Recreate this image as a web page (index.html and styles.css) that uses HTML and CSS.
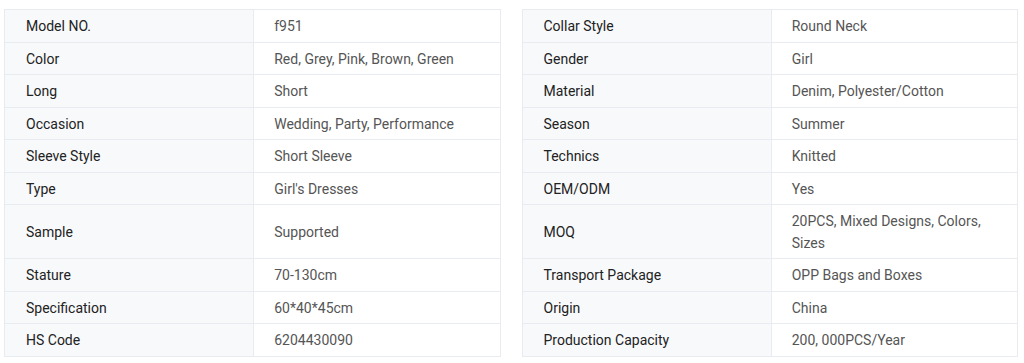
FILE: index.html
```html
<!DOCTYPE html>
<html lang="en">
<head>
<meta charset="utf-8">
<title>Specifications</title>
<link rel="stylesheet" href="styles.css">
</head>
<body>
<div class="specs">
  <table class="spec-table">
    <colgroup><col class="col-label"><col class="col-value"></colgroup>
    <tr><th>Model NO.</th><td>f951</td></tr>
    <tr><th>Color</th><td>Red, Grey, Pink, Brown, Green</td></tr>
    <tr><th>Long</th><td>Short</td></tr>
    <tr><th>Occasion</th><td>Wedding, Party, Performance</td></tr>
    <tr><th>Sleeve Style</th><td>Short Sleeve</td></tr>
    <tr><th>Type</th><td>Girl's Dresses</td></tr>
    <tr class="tall"><th>Sample</th><td>Supported</td></tr>
    <tr><th>Stature</th><td>70-130cm</td></tr>
    <tr><th>Specification</th><td>60*40*45cm</td></tr>
    <tr><th>HS Code</th><td>6204430090</td></tr>
  </table>
  <table class="spec-table">
    <colgroup><col class="col-label"><col class="col-value"></colgroup>
    <tr><th>Collar Style</th><td>Round Neck</td></tr>
    <tr><th>Gender</th><td>Girl</td></tr>
    <tr><th>Material</th><td>Denim, Polyester/Cotton</td></tr>
    <tr><th>Season</th><td>Summer</td></tr>
    <tr><th>Technics</th><td>Knitted</td></tr>
    <tr><th>OEM/ODM</th><td>Yes</td></tr>
    <tr class="tall"><th>MOQ</th><td>20PCS, Mixed Designs, Colors, Sizes</td></tr>
    <tr><th>Transport Package</th><td>OPP Bags and Boxes</td></tr>
    <tr><th>Origin</th><td>China</td></tr>
    <tr><th>Production Capacity</th><td>200, 000PCS/Year</td></tr>
  </table>
</div>
</body>
</html>
```
FILE: styles.css
```css
html, body {
  margin: 0;
  padding: 0;
  background: #ffffff;
}
body {
  font-family: Roboto, "Liberation Sans", Arial, sans-serif;
  font-size: 14px;
}
.specs {
  display: grid;
  grid-template-columns: 1fr 1fr;
  align-items: start;
  column-gap: 21px;
  padding: 9px 6px 0 4px;
}
.spec-table {
  width: 100%;
  border-collapse: collapse;
  table-layout: fixed;
}
.col-label {
  width: 50.3%;
}
.col-value {
  width: 49.7%;
}
.spec-table th,
.spec-table td {
  border: 1px solid #e8ebf0;
  padding: 6px 20px 4px 21px;
  line-height: 21.5px;
  text-align: left;
  vertical-align: middle;
  font-weight: 400;
}
.spec-table th {
  background: #f8f9fb;
  color: #222222;
}
.spec-table td {
  background: #ffffff;
  color: #555555;
  padding-left: 20px;
  padding-right: 22px;
}
.spec-table tr.tall th,
.spec-table tr.tall td {
  height: 43px;
}
```
